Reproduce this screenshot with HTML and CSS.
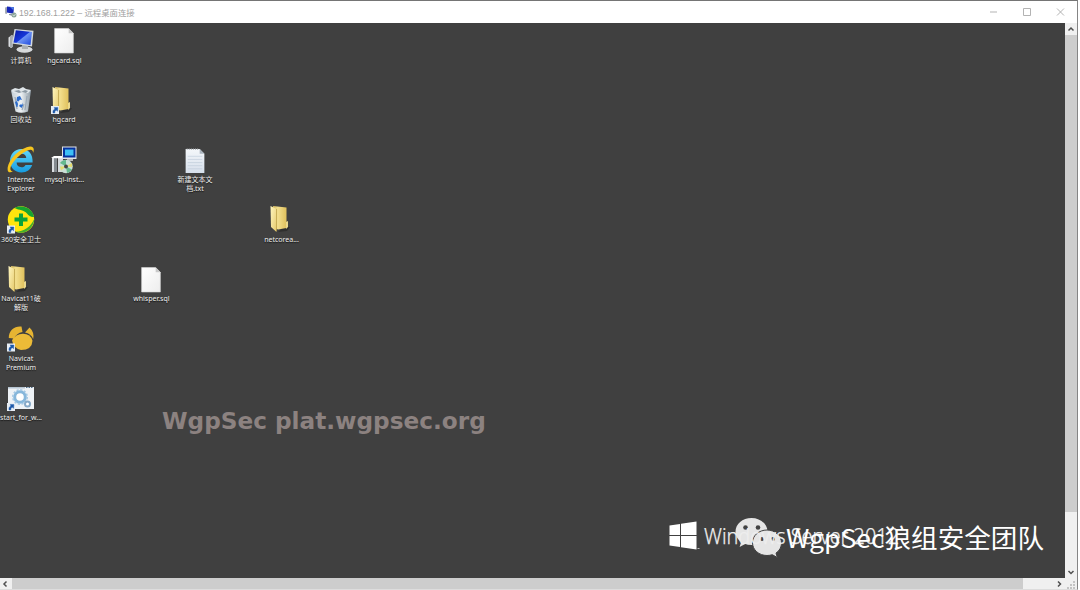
FILE: index.html
```
<!DOCTYPE html>
<html lang="en">
<head>
<meta charset="utf-8">
<title>192.168.1.222 – 远程桌面连接</title>
<link rel="stylesheet" href="styles.css">
</head>
<body>
<svg class="defs" width="0" height="0">
  <defs>
    <linearGradient id="screen" x1="0" y1="0" x2="1" y2="1"><stop offset="0" stop-color="#0718a8"/><stop offset=".48" stop-color="#1737d8"/><stop offset=".52" stop-color="#6b92f4"/><stop offset="1" stop-color="#1a45dc"/></linearGradient>
    <linearGradient id="paper" x1="0" y1="0" x2="1" y2="1"><stop offset="0" stop-color="#fff"/><stop offset="1" stop-color="#ededed"/></linearGradient>
    <linearGradient id="note" x1="0" y1="0" x2="0" y2="1"><stop offset="0" stop-color="#f4f7fa"/><stop offset="1" stop-color="#d6dfeb"/></linearGradient>
    <linearGradient id="foldback" x1="0" y1="0" x2="1" y2="0"><stop offset="0" stop-color="#cfb255"/><stop offset=".4" stop-color="#f3df8e"/><stop offset="1" stop-color="#dfc05c"/></linearGradient>
    <linearGradient id="foldfront" x1="0" y1="0" x2="1" y2="1"><stop offset="0" stop-color="#fff6bf"/><stop offset="1" stop-color="#e6ca6c"/></linearGradient>
    <linearGradient id="ieblue" x1="0" y1="0" x2="0" y2="1"><stop offset="0" stop-color="#62d8fb"/><stop offset="1" stop-color="#169be0"/></linearGradient>
    <linearGradient id="bin" x1="0" y1="0" x2="1" y2="0"><stop offset="0" stop-color="#c3ced6"/><stop offset=".5" stop-color="#edf1f4"/><stop offset="1" stop-color="#8d9aa4"/></linearGradient>
    <g id="shortcut"><path d="M0 0h8v8H0z" fill="#e6edf4"/><path d="M2 7C1.600 4.600 2.600 3.400 4 3.200L3.200 1.400 6.900 1.600 6.600 5.300 5.300 4.200C4 4.600 3.800 5.500 3.800 7z" fill="#1d58a8" stroke="#1d58a8" stroke-width=".4"/></g>
    <symbol id="i-computer" viewBox="0 0 28 26">
      <path d="M1.500 9.500 5 7v13l-3.500-1.500z" fill="#d9dcdf"/><path d="M3 8l3-1v12l-3 1z" fill="#a6abb0"/>
      <ellipse cx="17.500" cy="21.500" rx="8" ry="3.200" fill="#d6d9dc"/><path d="M15 17h6v4h-6z" fill="#a9aeb2"/>
      <path d="M7.500 1 26.500 2.800 25 18.500 5 15.500z" fill="#d4dadf"/><path d="M8.800 2.200 25 3.900 23.500 17 6.500 14.500z" fill="url(#screen)"/>
    </symbol>
    <symbol id="i-file" viewBox="0 0 20 25"><path d="M1 .5h13.500L19 5v19H1z" fill="url(#paper)" stroke="#d5d5d5" stroke-width=".6"/><path d="M14.500.5V5H19z" fill="#c9c9c9"/></symbol>
    <symbol id="i-text" viewBox="0 0 20 25"><path d="M1 1h13.500L19 5.500V24H1z" fill="url(#note)"/><path d="M3 8h14M3 11h14M3 14h14M3 17h14M3 20h14" stroke="#bdc9d9" stroke-width=".6"/><path d="M2 1.200h12" stroke="#a2a6aa" stroke-width="1.200" stroke-dasharray="1 1"/><path d="M14.500 1v4.500H19z" fill="#aab4bf"/></symbol>
    <symbol id="i-folder" viewBox="0 0 23 28"><path d="M15 22l6 0-3 4-9 1z" fill="#252525" opacity=".6"/><path d="M4 1 17.500 2.500V23L9 24.500 3 22z" fill="url(#foldback)"/><path d="M17 17l2-1v6l-2 2z" fill="#ead88d"/><path d="M1.500 1 7.500 4V27L2 22z" fill="url(#foldfront)"/><path d="M7.500 4v22" stroke="#b89c45" stroke-width=".7"/></symbol>
    <symbol id="i-bin" viewBox="0 0 22 28"><path d="M1 4.500h20L18 25.500Q11 28 5.500 25.500z" fill="url(#bin)"/><path d="M1 4 5 2l4 1 4-2 3 2 5 1-3 3H4z" fill="#dfe5e9"/><path d="M4 5l5-1 2 2 4-2 3 1-2 2-4-1-3 1z" fill="#8c99a3"/><path d="M5 11l2 12M17 10l-2 14M14 18l-2 6" stroke="#9aa8b4" stroke-width="1.200"/><path d="M7 11l3-1 2 4-2-.5-1.500 2-2-1zM5 16l2-1 1 3-.5 3H6.500zM9 20l1-1.500 2 0 0-2 1 3-1.500 2.500z" fill="#2b6bcb"/></symbol>
    <symbol id="i-ie" viewBox="0 0 28 28"><path fill-rule="evenodd" d="M14.500 3C7.500 3 3 8.500 3 15s4.700 11.500 11.500 11.500c5.300 0 9.200-3 10.700-7.500h-6.700c-.8 1.500-2 2.300-4 2.300-3 0-4.800-1.800-4.900-4.700h16C26 8.500 22 3 14.500 3zM9.700 12c.5-2.800 2.300-4.200 4.900-4.200s4.300 1.400 4.700 4.200z" fill="url(#ieblue)"/><path d="M6 25.500C-2 29.500-.5 18 6.500 10.500 13 3.500 23-1.500 26 1.500c1.200 1.200.8 3.500 0 5.500.2-3-1.500-4-5.500-2.500C14 7 7 14 4 20c-1.200 3-.8 4.800 2 5.500z" fill="#f6c51e"/></symbol>
    <symbol id="i-installer" viewBox="0 0 28 28"><path d="M2 12l4-2v16H2z" fill="#dcdfe2"/><path d="M4 12h3v14H4z" fill="#858b90"/><path d="M8 12h5v14H8z" fill="#d5d9db"/><path d="M1 12l3-2h12l-2 2.500z" fill="#fff"/><path d="M12 .5h14.500v12.500H12z" fill="#e1e3e4"/><path d="M13 1.500h12.500v10H13z" fill="#06329e"/><path d="M15 3.500h8.500v6H15z" fill="#3dc1f7"/><path d="M17 13h6v2h-6z" fill="#b5b5b5"/><circle cx="16" cy="20.500" r="6.800" fill="#cadfd5"/><path d="M16 20.500 10 17q2-3 6-3zM16 20.500l6 3q-2 3-5 3.500z" fill="#65b88e"/><path d="M16 20.500 22 17v4zM16 20.500l-5 4-1-4z" fill="#e5dc70"/><circle cx="16" cy="20.500" r="1.900" fill="#444"/></symbol>
    <symbol id="i-360" viewBox="0 0 28 28"><circle cx="14" cy="13.500" r="13.200" fill="#ffe50d"/><path d="M7.500 2C15-1.700 25.500 1.500 27 11c-3 .5-5-1.200-7-3.500C17 3.800 12.500 4.500 7.500 2z" fill="#17a52f"/><path d="M27.200 13C27 22 18 29.500 9 25.800 16.500 25.500 24 21 27.200 13z" fill="#44af2c"/><path d="M12 7.500h4v4h4.500v4H16v4.500h-4v-4.500H7.500v-4H12z" fill="#0aa33b"/><use href="#shortcut" x="0" y="19.500"/></symbol>
    <symbol id="i-navicat" viewBox="0 0 28 28"><path d="M1.800 13C1.500 5 8 .7 14.500 1.500L15.500 7Q9.500 8 7 13.500z" fill="#e6b432"/><path d="M18 7.500 22.500 2.500q5 4.500 3.700 11.500Q24 8.500 18 7.500z" fill="#e6b432"/><path d="M5 15.500Q8.500 8.800 16 8.800q7.500 0 9.500 7Q25 25 14 25q-7-1-9-9.500z" fill="#ecbb37"/><use href="#shortcut" x="0" y="18.500"/></symbol>
    <symbol id="i-script" viewBox="0 0 28 26"><path d="M1 1h26v22H1z" fill="#eef2f6"/><path d="M1 1h17v1.500H1z" fill="#b6c5d2"/><path d="M19 1.500h7" stroke="#4f6f8d" stroke-dasharray="1.500 1"/><circle cx="13" cy="11" r="5.300" fill="#fff" stroke="#87b7db" stroke-width="3"/><circle cx="13" cy="11" r="7.200" fill="none" stroke="#a3c8e4" stroke-width="1.600" stroke-dasharray="2.200 1.570"/><circle cx="20.500" cy="18" r="2.500" fill="#fff" stroke="#86a9c8" stroke-width="2"/><use href="#shortcut" x="0" y="17"/></symbol>
  </defs>
</svg>
<div class="window">
  <header class="titlebar">
    <svg class="app-icon" viewBox="0 0 12 12"><path d="M0 1.500 2 1v7l-2-.5z" fill="#a6acb6"/><path d="M2 .5 9 1.200 8.400 7.800 1.800 6.500z" fill="#1627b9"/><path d="M5 1l4 .3-.5 3z" fill="#5380e5"/><path d="M4 8h5l-1 2-4-1z" fill="#8b95a5"/><circle cx="9" cy="9" r="2.500" fill="#8ba498"/><path d="M7.500 9 9 10l1.500-2" fill="none" stroke="#e7f1ea" stroke-width=".7"/></svg>
    <span class="title"><span class="address">192.168.1.222 – </span>远程桌面连接</span>
    <svg class="controls" viewBox="0 0 76 10"><path d="M0 5h7M33.500 1.500h7v7h-7zM67 1.500l7 7M74 1.500l-7 7" fill="none" stroke="#aaa" stroke-width=".9"/></svg>
  </header>
  <div class="viewport">
    <main class="desktop">
      <div class="shortcut computer"><svg class="icon"><use href="#i-computer"/></svg><span>计算机</span></div>
      <div class="shortcut hgsql"><svg class="icon"><use href="#i-file"/></svg><span>hgcard.sql</span></div>
      <div class="shortcut recycle"><svg class="icon"><use href="#i-bin"/></svg><span>回收站</span></div>
      <div class="shortcut hgcard"><svg class="icon folder" viewBox="0 0 28 28"><use href="#i-folder" x="1" width="23" height="28"/><use href="#shortcut" x="1" y="20"/></svg><span>hgcard</span></div>
      <div class="shortcut ie"><svg class="icon"><use href="#i-ie"/></svg><span>Internet<br>Explorer</span></div>
      <div class="shortcut mysql"><svg class="icon"><use href="#i-installer"/></svg><span>mysql-inst...</span></div>
      <div class="shortcut newtext"><svg class="icon"><use href="#i-text"/></svg><span>新建文本文<br>档.txt</span></div>
      <div class="shortcut guard"><svg class="icon"><use href="#i-360"/></svg><span>360安全卫士</span></div>
      <div class="shortcut netcore"><svg class="icon folder" viewBox="0 0 28 28"><use href="#i-folder" x="2" width="23" height="28"/></svg><span>netcorea...</span></div>
      <div class="shortcut nav11"><svg class="icon folder" viewBox="0 0 28 28"><use href="#i-folder" x="0" width="23" height="28"/></svg><span>Navicat11破<br>解版</span></div>
      <div class="shortcut whisper"><svg class="icon"><use href="#i-file"/></svg><span>whisper.sql</span></div>
      <div class="shortcut premium"><svg class="icon"><use href="#i-navicat"/></svg><span>Navicat<br>Premium</span></div>
      <div class="shortcut start"><svg class="icon"><use href="#i-script"/></svg><span>start_for_w...</span></div>
      <div class="site-mark">WgpSec plat.wgpsec.org</div>
      <svg class="brand" viewBox="0 0 400 60">
        <path d="M4.500 11.500 15 10V21H4.500zM16 9.800 31.500 7.500V21H16zM4.500 22H15V33.100L4.500 31.500zM16 22h15.500v13.500L16 33.300z" fill="#fff"/><path d="M32.500 34.500h2" stroke="#bbb"/>
        <g fill="#e5e5e5"><path d="M86.500 4C77.500 4 70.500 10 70.500 17.700c0 4.200 2.200 7.900 5.700 10.400l-1.600 4.900 5.500-3c2 .7 4.200 1.100 6.400 1.100 9 0 16-6 16-13.400S95.500 4 86.500 4z"/><path d="M102 16c-8 0-14.500 5.500-14.500 12.700S94 41.500 102 41.500c1.900 0 3.700-.3 5.300-.8l5 2.800-1.300-4.400c3.400-2.300 5.500-5.900 5.500-10.100 0-7-6.500-13-14.500-13z" stroke="#414141" stroke-width="1"/></g>
        <g fill="#414141"><circle cx="80.500" cy="13.500" r="2.300"/><circle cx="93" cy="13.500" r="2.300"/><circle cx="97" cy="25" r="1.900"/><circle cx="108" cy="25" r="1.900"/></g>
        <text class="server" x="39" y="29.500" textLength="195" lengthAdjust="spacingAndGlyphs">Windows Server 2012</text>
        <text class="team" x="121" y="34" textLength="258" lengthAdjust="spacingAndGlyphs">WgpSec狼组安全团队</text>
      </svg>
    </main>
    <aside class="vscroll"><svg viewBox="0 0 12 12"><path d="M3.500 7.500 6 5l2.500 2.500"/></svg><div class="vthumb"></div><svg viewBox="0 0 12 12"><path d="M3.500 5 6 7.500 8.500 5"/></svg></aside>
  </div>
  <footer class="hscroll"><svg viewBox="0 0 12 12"><path d="M6.500 3.500 4 6l2.500 2.500"/></svg><div class="hthumb"></div><svg viewBox="0 0 12 12"><path d="M5 3.500 7.500 6 5 8.500"/></svg><svg class="grip" viewBox="0 0 12 12"><path d="M8 3h2v2H8zM5 6h2v2H5zM8 6h2v2H8zM2 9h2v2H2zM5 9h2v2H5zM8 9h2v2H8z"/></svg></footer>
</div>
</body>
</html>
```
FILE: styles.css
```
* { box-sizing: border-box; }
body { margin: 0; width: 1080px; height: 590px; overflow: hidden; background: #fff; font-family: "Noto Sans", "Noto Sans CJK SC", sans-serif; }
.defs { display: block; }
.window { width: 1078px; height: 590px; display: flex; flex-direction: column; border-top: 1px solid #757575; border-right: 1px solid #858585; border-bottom: 1px solid #ddd; }
.titlebar { height: 22px; flex: none; display: flex; align-items: center; padding: 0 11px 0 5px; background: #fff; }
.app-icon { width: 12px; height: 12px; margin-right: 2px; }
.title { font: 8.400px/12px "Noto Sans CJK SC", sans-serif; color: #a0a0a0; white-space: nowrap; }
.address { font: 8.800px/12px "Liberation Sans", sans-serif; letter-spacing: -.04px; white-space: pre; }
.controls { width: 76px; height: 10px; margin-left: auto; }
.viewport { display: flex; height: 555px; flex: none; }
.desktop { position: relative; flex: 1; background: #404040; overflow: hidden; }
.shortcut { position: absolute; width: 60px; display: flex; flex-direction: column; align-items: center; gap: 2px; color: #efefef; font-size: 7px; line-height: 8.500px; text-align: center; white-space: nowrap; text-shadow: 0 1px 1px #111; }
.icon { width: 28px; height: 28px; flex: none; }
.computer { left: -9px; top: 5px; gap: 3px; } .computer .icon, .hgsql .icon { height: 26px; }
.hgsql { left: 34.400px; top: 5px; gap: 3px; }
.recycle { left: -9px; top: 63px; }
.hgcard { left: 34px; top: 63px; } .hgcard .icon { margin-left: -1px; }
.ie { left: -9px; top: 123px; }
.mysql { left: 34.400px; top: 123px; }
.newtext { left: 165px; top: 125px; } .newtext .icon { height: 26px; }
.guard { left: -9px; top: 183px; }
.netcore { left: 251.500px; top: 182px; gap: 3px; } .netcore .icon { margin-left: -2px; }
.nav11 { left: -9px; top: 242px; }
.whisper { left: 121.400px; top: 244px; } .whisper .icon { height: 26px; }
.premium { left: -9px; top: 302px; }
.start { left: -9px; top: 363px; } .start .icon { height: 26px; }
.site-mark { position: absolute; left: 162px; top: 384px; color: #8c8280; font: bold 23.200px/28px "DejaVu Sans", sans-serif; white-space: nowrap; }
.brand { position: absolute; left: 665px; top: 491px; width: 400px; height: 60px; }
.server { font: 300 22px "Noto Sans", "Open Sans", sans-serif; fill: #eee; stroke: #eee; stroke-width: .25; }
.team { font: 400 26px "Noto Sans CJK SC", sans-serif; fill: #fff; }
.vscroll { width: 12px; display: flex; flex-direction: column; background: #f0f0f0; }
.vscroll svg, .hscroll svg { width: 12px; height: 12px; flex: none; fill: none; stroke: #505050; stroke-width: 1.500; }
.vthumb { height: 477px; background: #cdcdcd; }
.vscroll svg:last-child { margin-top: auto; }
.hscroll { height: 11px; flex: none; display: flex; background: #f0f0f0; align-items: center; }
.hthumb { width: 1011px; height: 11px; background: #cdcdcd; margin-right: auto; }
.hscroll .grip { fill: #c4c4c4; stroke: none; margin-left: 0; }
```
